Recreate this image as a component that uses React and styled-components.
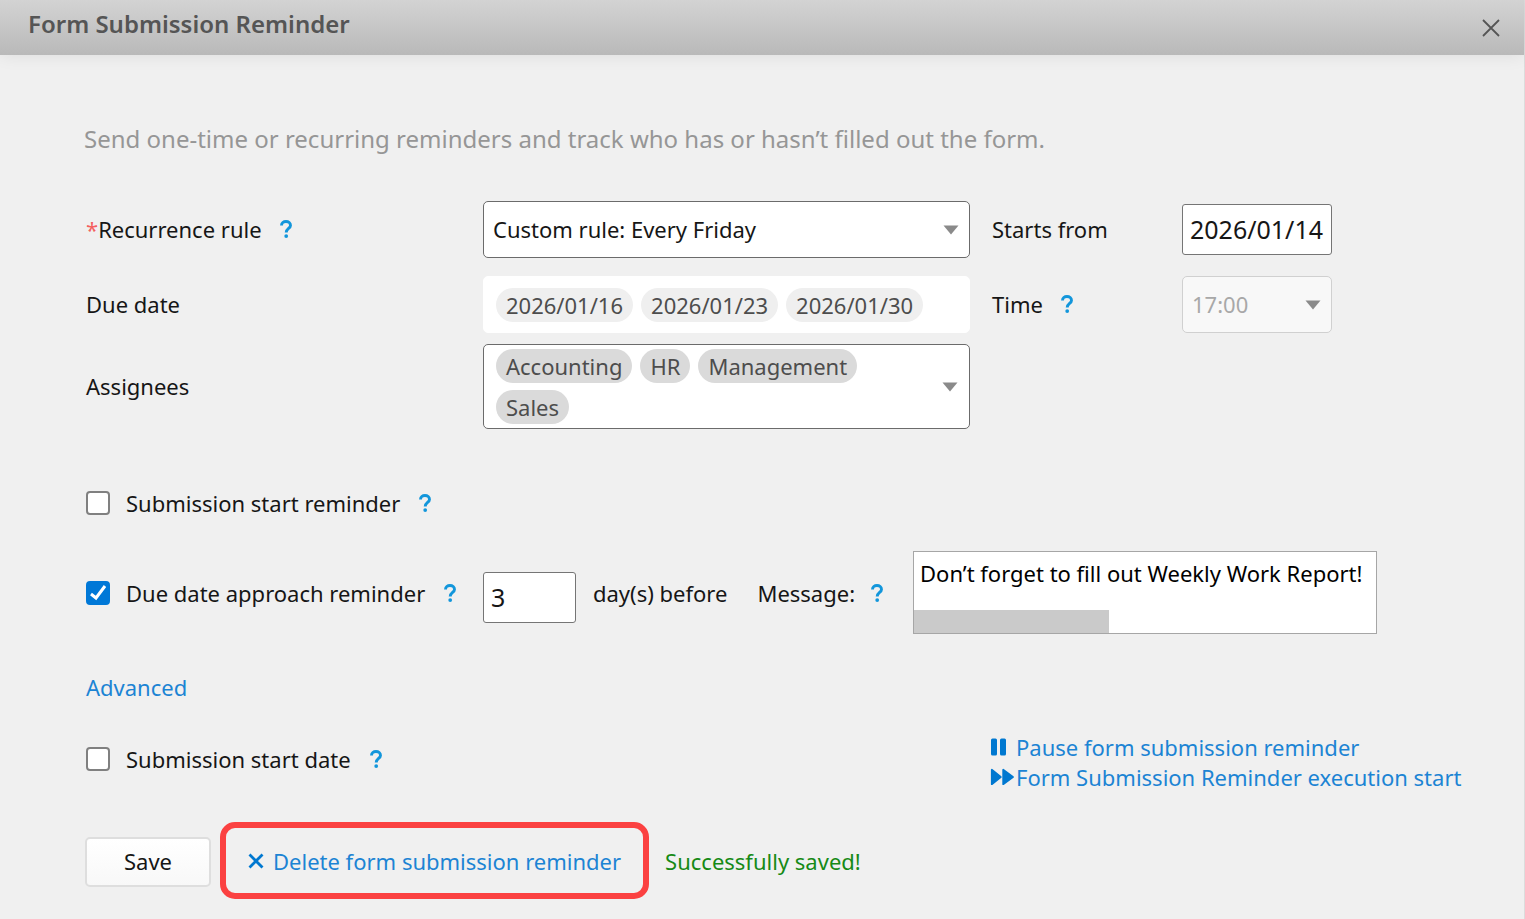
import React, { useState } from "react";
import styled, { createGlobalStyle } from "styled-components";

const GlobalStyle = createGlobalStyle`
  *, *::before, *::after { box-sizing: border-box; }
  body {
    margin: 0;
    background: #f0f0f0;
    color: #161616;
    font: 22px/30px "Noto Sans", "Open Sans", sans-serif;
  }
  input, select, textarea, button { font: inherit; color: inherit; margin: 0; }
`;

const Dialog = styled.section`
  min-height: 100vh;
  border-right: 1px solid #dcdcdc;
`;

const Header = styled.header`
  display: flex;
  justify-content: space-between;
  height: 55px;
  padding: 8px 24px 0 28px;
  background: linear-gradient(#d3d3d3, #b9b9b9);
  box-shadow: 0 1px 16px rgba(0, 0, 0, 0.08);
`;

const Title = styled.h1`
  margin: 0;
  font-size: 24px;
  line-height: 32px;
  font-weight: 600;
  color: #555;
`;

const CloseButton = styled.button`
  display: flex;
  align-items: center;
  height: 40px;
  padding: 0;
  border: 0;
  background: none;
  color: #555;
  cursor: pointer;
`;

const Body = styled.form`
  padding: 67px 54px 20px 86px;
`;

const Intro = styled.p`
  margin: 0 0 46px -2px;
  font-size: 24px;
  line-height: 33px;
  color: #969696;
`;

const FieldGrid = styled.div`
  display: grid;
  grid-template-columns: 397px minmax(300px, 487px) 212px 150px;
  align-items: center;
`;

const Cell = styled.div`
  display: flex;
  align-items: center;
  min-height: ${(p) => p.$height}px;
  margin-bottom: ${(p) => p.$after || 0}px;
`;

const LabelCell = styled(Cell)`
  gap: 18px;
  padding-bottom: 2px;
  padding-left: ${(p) => (p.$side ? 22 : 0)}px;
`;

const Required = styled.span`
  color: #f46060;
`;

const HelpButton = styled.button`
  display: inline-flex;
  padding: 0;
  border: 0;
  background: none;
  color: #1296db;
  cursor: pointer;
`;

const SelectWrap = styled.div`
  position: relative;
  flex: 1;
`;

const Select = styled.select`
  display: block;
  width: 100%;
  height: 57px;
  padding: 0 40px 2px 9px;
  appearance: none;
  border: 1px solid #6b6b6b;
  border-radius: 5px;
  background: #fff;
  &:disabled {
    border-color: #d0d0d0;
    background: #f8f8f8;
    color: #a8a8a8;
    opacity: 1;
  }
`;

const ArrowSlot = styled.span`
  position: absolute;
  top: 50%;
  right: 11px;
  display: flex;
  transform: translateY(-50%);
  pointer-events: none;
`;

const TextInput = styled.input`
  width: ${(p) => p.$width}px;
  height: 51px;
  padding: 0 7px 2px;
  border: 1px solid #757575;
  border-radius: 3px;
  background: #fff;
  font-size: 25px;
`;

const DaysInput = styled(TextInput)`
  margin-top: 10px;
`;

const ChipBox = styled.div`
  flex: 1;
  display: flex;
  flex-wrap: wrap;
  align-items: center;
  gap: 7px 8px;
  min-height: 57px;
  padding: 4px 40px 4px 12px;
  border: 1px solid #fff;
  border-radius: 5px;
  background: #fff;
`;

const ChipButton = styled(ChipBox).attrs({ as: "button", type: "button" })`
  position: relative;
  padding-right: 48px;
  border-color: #6b6b6b;
  text-align: left;
  cursor: pointer;
`;

const Chip = styled.span`
  padding: 1px 10px;
  border-radius: 17px;
  line-height: 32px;
  background: ${(p) => (p.$light ? "#efefef" : "#dadada")};
  color: #4d4d4d;
`;

const OptionRow = styled.div`
  display: flex;
  align-items: center;
  min-height: ${(p) => p.$height}px;
  margin-top: ${(p) => p.$before}px;
`;

const CheckGroup = styled.div`
  display: flex;
  align-items: center;
  gap: 19px;
  width: 397px;
`;

const RaisedCheckGroup = styled(CheckGroup)`
  padding-bottom: 6px;
`;

const CheckLabel = styled.label`
  display: inline-flex;
  align-items: center;
  gap: 16px;
`;

const Checkbox = styled.input`
  appearance: none;
  width: 24px;
  height: 24px;
  border: 2px solid #808080;
  border-radius: 4px;
  background: #fff;
  &:checked {
    border-color: #0078d7;
    background: #0078d7 url("data:image/svg+xml,%3Csvg xmlns='http://www.w3.org/2000/svg' viewBox='0 0 20 20'%3E%3Cpath d='M3 11l5 4 9-12' fill='none' stroke='white' stroke-width='3'/%3E%3C/svg%3E") center / 20px 20px no-repeat;
  }
`;

const InlineLabel = styled.label`
  margin-left: 17px;
`;

const MessageLabel = styled.label`
  margin: 0 16px 0 30px;
`;

const MessageBox = styled.div`
  position: relative;
  width: 464px;
  height: 83px;
  margin-left: 30px;
`;

const Message = styled.textarea`
  display: block;
  width: 100%;
  height: 100%;
  padding: 6px;
  border: 1px solid #a6a6a6;
  background: #fff;
  color: #000;
  white-space: nowrap;
  overflow: hidden;
  resize: none;
`;

const ScrollThumb = styled.span`
  position: absolute;
  left: 1px;
  bottom: 1px;
  width: 195px;
  height: 23px;
  background: #cacaca;
`;

const Link = styled.a`
  display: inline-flex;
  align-items: center;
  color: #1c84d4;
  text-decoration: none;
`;

const IconSlot = styled.span`
  display: inline-flex;
  width: ${(p) => p.$width}px;
  color: #0078d0;
`;

const LinkStack = styled.nav`
  display: flex;
  flex-direction: column;
  align-items: flex-start;
  width: 480px;
  margin-left: auto;
  white-space: nowrap;
`;

const Footer = styled.footer`
  display: flex;
  align-items: center;
  margin: 30px 0 0 -1px;
`;

const SaveButton = styled.button`
  width: 126px;
  height: 50px;
  margin-top: 2px;
  padding: 0 0 2px;
  border: 2px solid #dedede;
  border-radius: 5px;
  background: linear-gradient(#fff, #f8f8f8);
  cursor: pointer;
`;

const Highlight = styled.div`
  display: flex;
  align-items: center;
  height: 77px;
  margin: 0 16px 0 9px;
  padding: 0 22px;
  border: 6px solid #fb4141;
  border-radius: 15px;
`;

const Status = styled.output`
  color: #168a16;
`;

function Help({ topic }) {
  return (
    <HelpButton type="button" aria-label={`Help: ${topic}`}>
      <svg width="12" height="18" viewBox="0 0 12 18" aria-hidden="true">
        <path d="M1.5 5.4C1.5 3 3.4 1.5 6 1.5s4.5 1.5 4.5 3.9c0 3-4.3 3.2-4.3 7.1" fill="none" stroke="currentColor" strokeWidth="2.9" />
        <circle cx="6.2" cy="16.1" r="1.9" fill="currentColor" />
      </svg>
    </HelpButton>
  );
}

function Arrow() {
  return (
    <ArrowSlot>
      <svg width="16" height="10" viewBox="0 0 16 10" aria-hidden="true">
        <path d="M0.5 0.5h15L8 9.5z" fill="#8a8a8a" />
      </svg>
    </ArrowSlot>
  );
}

function CheckOption({ id, label, defaultChecked }) {
  const [checked, setChecked] = useState(Boolean(defaultChecked));
  return (
    <>
      <CheckLabel htmlFor={id}>
        <Checkbox id={id} type="checkbox" checked={checked} onChange={(e) => setChecked(e.target.checked)} />
        {label}
      </CheckLabel>
      <Help topic={label} />
    </>
  );
}

export default function App() {
  return (
    <Dialog role="dialog" aria-labelledby="title">
      <GlobalStyle />
      <Header>
        <Title id="title">Form Submission Reminder</Title>
        <CloseButton type="button" aria-label="Close">
          <svg width="18" height="18" viewBox="0 0 18 18" aria-hidden="true">
            <path d="M1 1l16 16M17 1L1 17" stroke="currentColor" strokeWidth="1.8" />
          </svg>
        </CloseButton>
      </Header>
      <Body onSubmit={(e) => e.preventDefault()}>
        <Intro>Send one-time or recurring reminders and track who has or hasn’t filled out the form.</Intro>

        <FieldGrid>
          <LabelCell $height={57} $after={18}>
            <label htmlFor="rule"><Required>*</Required>Recurrence rule</label>
            <Help topic="Recurrence rule" />
          </LabelCell>
          <Cell $height={57} $after={18}>
            <SelectWrap>
              <Select id="rule" defaultValue="friday">
                <option value="friday">Custom rule: Every Friday</option>
              </Select>
              <Arrow />
            </SelectWrap>
          </Cell>
          <LabelCell $height={57} $after={18} $side>
            <label htmlFor="start">Starts from</label>
          </LabelCell>
          <Cell $height={57} $after={18}>
            <TextInput id="start" $width={150} defaultValue="2026/01/14" />
          </Cell>

          <LabelCell $height={57} $after={11}>Due date</LabelCell>
          <Cell $height={57} $after={11}>
            <ChipBox>
              <Chip $light>2026/01/16</Chip>
              <Chip $light>2026/01/23</Chip>
              <Chip $light>2026/01/30</Chip>
            </ChipBox>
          </Cell>
          <LabelCell $height={57} $after={11} $side>
            <label htmlFor="time">Time</label>
            <Help topic="Time" />
          </LabelCell>
          <Cell $height={57} $after={11}>
            <SelectWrap>
              <Select id="time" disabled defaultValue="17:00">
                <option>17:00</option>
              </Select>
              <Arrow />
            </SelectWrap>
          </Cell>

          <LabelCell $height={85}><label htmlFor="assignees">Assignees</label></LabelCell>
          <Cell $height={85}>
            <ChipButton id="assignees" aria-haspopup="listbox">
              <Chip>Accounting</Chip>
              <Chip>HR</Chip>
              <Chip>Management</Chip>
              <Chip>Sales</Chip>
              <Arrow />
            </ChipButton>
          </Cell>
        </FieldGrid>

        <OptionRow $before={59} $height={30}>
          <CheckGroup>
            <CheckOption id="start-reminder" label="Submission start reminder" />
          </CheckGroup>
        </OptionRow>

        <OptionRow $before={33} $height={83}>
          <CheckGroup>
            <CheckOption id="due-reminder" label="Due date approach reminder" defaultChecked />
          </CheckGroup>
          <DaysInput id="days" $width={93} defaultValue="3" />
          <InlineLabel htmlFor="days">day(s) before</InlineLabel>
          <MessageLabel htmlFor="message">Message:</MessageLabel>
          <Help topic="Message" />
          <MessageBox>
            <Message id="message" defaultValue="Don’t forget to fill out Weekly Work Report!" />
            <ScrollThumb />
          </MessageBox>
        </OptionRow>

        <OptionRow $before={38} $height={30}>
          <Link href="#advanced">Advanced</Link>
        </OptionRow>

        <OptionRow $before={30} $height={60}>
          <RaisedCheckGroup>
            <CheckOption id="start-date" label="Submission start date" />
          </RaisedCheckGroup>
          <LinkStack>
            <Link href="#pause">
              <IconSlot $width={26}>
                <svg width="17" height="18" viewBox="0 0 17 18" aria-hidden="true">
                  <rect x="1" y="0.5" width="6" height="17" rx="1.5" fill="currentColor" />
                  <rect x="10" y="0.5" width="6" height="17" rx="1.5" fill="currentColor" />
                </svg>
              </IconSlot>
              Pause form submission reminder
            </Link>
            <Link href="#run">
              <IconSlot $width={26}>
                <svg width="25" height="18" viewBox="0 0 25 18" aria-hidden="true">
                  <path d="M1.8 1.8v14.4L10.8 9zM13.2 1.8v14.4L23 9z" fill="currentColor" stroke="currentColor" strokeWidth="1.8" strokeLinejoin="round" />
                </svg>
              </IconSlot>
              Form Submission Reminder execution start
            </Link>
          </LinkStack>
        </OptionRow>

        <Footer>
          <SaveButton type="submit">Save</SaveButton>
          <Highlight>
            <Link href="#delete">
              <IconSlot $width={25}>
                <svg width="16" height="16" viewBox="0 0 16 16" aria-hidden="true">
                  <path d="M1.5 1.5l13 13M14.5 1.5l-13 13" stroke="currentColor" strokeWidth="2.8" />
                </svg>
              </IconSlot>
              Delete form submission reminder
            </Link>
          </Highlight>
          <Status>Successfully saved!</Status>
        </Footer>
      </Body>
    </Dialog>
  );
}
